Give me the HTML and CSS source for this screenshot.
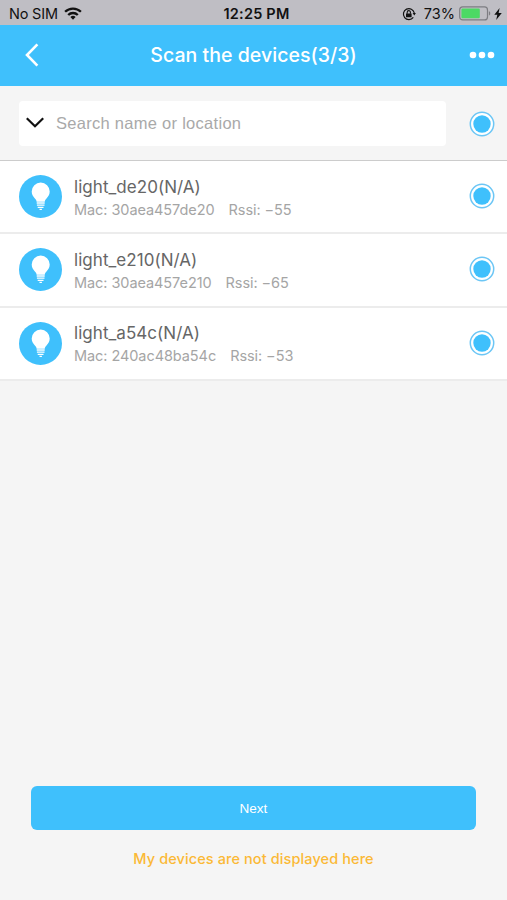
FILE: index.html
```html
<!DOCTYPE html>
<html lang="en">

<head>
    <meta charset="utf-8">
    <title>Scan the devices</title>
    <meta name="viewport" content="width=device-width, initial-scale=1">
    <link rel="stylesheet" href="styles.css">
</head>

<body>
    <!-- shared icons -->
    <svg class="sprite" width="0" height="0">
        <symbol id="bulb" viewBox="0 0 43 43">
            <circle cx="21.5" cy="21.5" r="21.5" fill="#3fc0fc"/>
            <path fill="#fff" d="M21.7 7.6a9 9 0 0 0-9 9c0 3.2 1.6 5.3 3.2 6.9 1 1 1.6 2 1.7 3.2h8.2c.1-1.2.7-2.2 1.7-3.2 1.6-1.6 3.2-3.7 3.2-6.9a9 9 0 0 0-9-9z"/>
            <path stroke="#fff" stroke-width="1.3" d="M17.7 28h8M17.9 30.2h7.6M18.7 32.3h5.8M20.5 34.3h2.4"/>
        </symbol>
        <symbol id="radio" viewBox="0 0 26 26">
            <circle cx="13" cy="13" r="11.7" fill="#fff" stroke="#6cc6f5" stroke-width="1.5"/>
            <circle cx="13" cy="13" r="8.7" fill="#3fc0fc"/>
        </symbol>
    </svg>

    <div class="status-bar">
        <div class="carrier">
            <span class="sim">No SIM</span>
            <svg width="18" height="13" viewBox="0 0 18 13">
                <g fill="none" stroke="#111" stroke-width="2.3">
                    <path d="M1.1 4.8a11.2 11.2 0 0 1 15.8 0"/>
                    <path d="M4.2 8a6.8 6.8 0 0 1 9.6 0"/>
                </g>
                <path fill="#111" d="M9 12.7 6.4 10.1a3.7 3.7 0 0 1 5.2 0z"/>
            </svg>
        </div>
        <span class="time">12:25 PM</span>
        <div class="power">
            <svg width="14" height="14" viewBox="0 0 14 14">
                <path fill="none" stroke="#111" stroke-width="1.2" d="M11.3 10.4A5.5 5.5 0 1 1 12.3 6"/>
                <path fill="#111" d="M10.6 6h3.3l-1.6 2.6zM4 6.4h5.6v3.9H4z"/>
                <path fill="none" stroke="#111" stroke-width="1.1" d="M5.2 6.7V5.2a1.6 1.6 0 0 1 3.2 0v1.5"/>
            </svg>
            <span class="percent">73%</span>
            <svg class="battery" width="32" height="15" viewBox="0 0 32 15">
                <rect x=".7" y=".9" width="27.8" height="13" rx="3" fill="none" stroke="#7d7d82" stroke-width="1.2"/>
                <rect x="2.4" y="2.6" width="18.4" height="9.6" rx="1.2" fill="#4cd964"/>
                <path fill="#7d7d82" d="M29.9 5.2c1.8.6 1.8 3.8 0 4.4z"/>
            </svg>
            <svg width="8" height="12" viewBox="0 0 8 12">
                <path fill="#111" d="M5.6 0 .3 6.8h3L2.2 12 7.8 4.9H4.6z"/>
            </svg>
        </div>
    </div>

    <header class="nav">
        <svg class="back" width="14" height="24" viewBox="0 0 14 24">
            <path fill="none" stroke="#fff" stroke-width="2.6" d="M12.4 1.4 2 12l10.4 10.6"/>
        </svg>
        <h1>Scan the devices(3/3)</h1>
        <svg class="more" width="26" height="8" viewBox="0 0 26 8">
            <g fill="#fff">
                <circle cx="4" cy="4" r="3.3"/>
                <circle cx="13" cy="4" r="3.3"/>
                <circle cx="22" cy="4" r="3.3"/>
            </g>
        </svg>
    </header>

    <div class="search">
        <div class="search-box">
            <svg width="18" height="12" viewBox="0 0 18 12">
                <path fill="none" stroke="#111" stroke-width="2.2" d="M.8 1.2 9 9.3l8.2-8.1"/>
            </svg>
            <span class="placeholder">Search name or location</span>
        </div>
        <svg class="radio"><use href="#radio"/></svg>
    </div>

    <ul class="devices">
        <li>
            <svg class="bulb"><use href="#bulb"/></svg>
            <div class="info">
                <div class="name">light_de20(N/A)</div>
                <div class="detail"><span>Mac: 30aea457de20</span><span>Rssi: −55</span></div>
            </div>
            <svg class="radio"><use href="#radio"/></svg>
        </li>
        <li>
            <svg class="bulb"><use href="#bulb"/></svg>
            <div class="info">
                <div class="name">light_e210(N/A)</div>
                <div class="detail"><span>Mac: 30aea457e210</span><span>Rssi: −65</span></div>
            </div>
            <svg class="radio"><use href="#radio"/></svg>
        </li>
        <li>
            <svg class="bulb"><use href="#bulb"/></svg>
            <div class="info">
                <div class="name">light_a54c(N/A)</div>
                <div class="detail"><span>Mac: 240ac48ba54c</span><span>Rssi: −53</span></div>
            </div>
            <svg class="radio"><use href="#radio"/></svg>
        </li>
    </ul>

    <footer>
        <button class="next">Next</button>
        <a class="missing">My devices are not displayed here</a>
    </footer>
</body>

</html>
```
FILE: styles.css
```css
* {
    box-sizing: border-box;
}

body {
    background: #f5f5f5;
    display: flex;
    flex-direction: column;
    font-family: Inter, "Liberation Sans", sans-serif;
    height: 900px;
    margin: 0;
    overflow: hidden;
    white-space: nowrap;
}

svg {
    display: block;
    flex: none;
}

.sprite {
    position: absolute;
}

.status-bar {
    align-items: center;
    background: #bfbec4;
    color: #111;
    display: grid;
    font-size: 14.5px;
    grid-template-columns: 1fr auto 1fr;
    height: 25px;
    line-height: 25px;
    padding: 1px 5px 0 9px;
}

.carrier,
.power {
    align-items: center;
    display: flex;
}

.carrier {
    gap: 6px;
}

.sim {
    letter-spacing: -0.2px;
}

.power {
    justify-content: flex-end;
}

.time {
    font-weight: 600;
    letter-spacing: 0.2px;
    margin-left: 2px;
}

.percent {
    margin: 0 4px 0 8px;
}

.battery {
    margin-right: 3px;
}

.nav {
    align-items: center;
    background: #3fc0fc;
    color: #fff;
    display: grid;
    grid-template-columns: 1fr auto 1fr;
    height: 61px;
    padding: 0 12px 2px;
}

.nav h1 {
    font-size: 19.5px;
    font-weight: 500;
    letter-spacing: 0.04px;
    margin: 0;
}

.back {
    margin-left: 13px;
}

.more {
    justify-self: end;
}

.search {
    align-items: center;
    border-bottom: 1px solid #ccc;
    display: flex;
    height: 75px;
    justify-content: space-between;
    padding: 0 12px 0 19px;
}

.search-box {
    align-items: center;
    background: #fff;
    border-radius: 4px;
    display: flex;
    gap: 12px;
    height: 45px;
    padding-left: 7px;
    width: 427px;
}

.placeholder {
    color: #a9a9a9;
    font-family: "Liberation Sans", sans-serif;
    font-size: 16.5px;
    letter-spacing: 0.28px;
}

.radio {
    height: 26px;
    width: 26px;
}

.search .radio {
    margin-top: 1px;
}

.devices {
    list-style: none;
    margin: 0;
    padding: 0;
}

.devices li {
    align-items: center;
    background: #fff;
    border-bottom: 2px solid #ececec;
    display: flex;
    height: 73.3px;
    padding: 0 12px 0 19px;
}

.devices .radio {
    margin-bottom: 1px;
}

.bulb {
    height: 43px;
    width: 43px;
}

.info {
    flex: 1;
    margin-left: 12px;
    padding-top: 2px;
}

.name {
    color: #666;
    font-size: 17px;
    letter-spacing: 0.05px;
    line-height: 24px;
}

.detail {
    color: #a5a5a5;
    display: flex;
    font-size: 14.5px;
    gap: 14px;
    letter-spacing: -0.07px;
    line-height: 22px;
}

footer {
    align-items: center;
    display: flex;
    flex-direction: column;
    margin-top: auto;
    padding: 0 31px 31px;
}

.next {
    background: #3fc0fc;
    border: 0;
    border-radius: 6px;
    color: #fff;
    font: 13.5px "Liberation Sans", sans-serif;
    height: 44px;
    width: 445px;
}

.missing {
    color: #fbb936;
    font-size: 14.5px;
    font-weight: 500;
    letter-spacing: 0.1px;
    line-height: 20px;
    margin-top: 19px;
}
```
